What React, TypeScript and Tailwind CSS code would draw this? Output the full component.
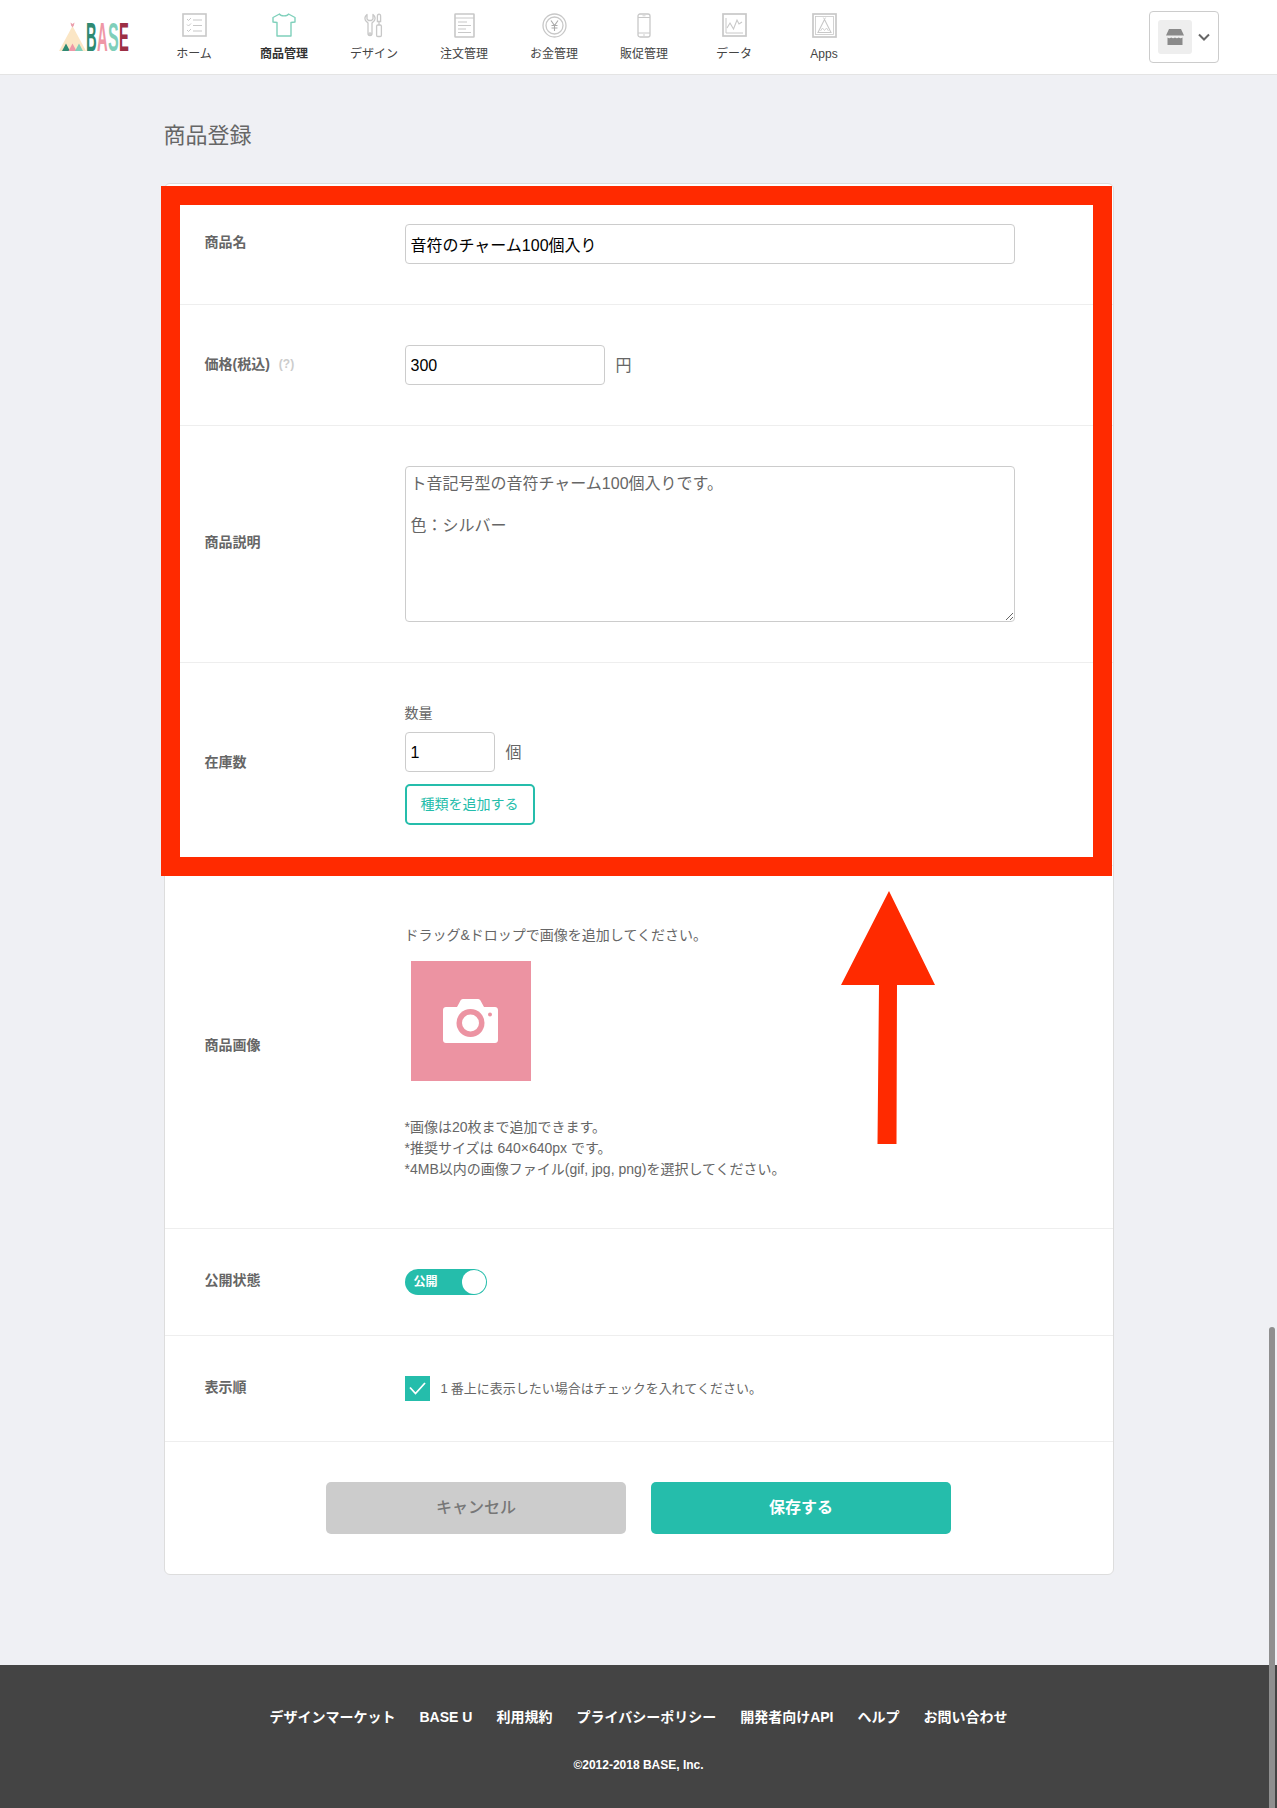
import React from "react";

const font = { fontFamily: '"Liberation Sans", "Noto Sans CJK JP", sans-serif' };

const Grey = "#c8c8c8";

function IconHome() {
  return (
    <svg width="25" height="24" viewBox="0 0 25 24" fill="none" stroke={Grey}>
      <rect x="1" y="1" width="23" height="22" strokeWidth="1.6" />
      <path d="M5 6l1.5 1.5L9 5M5 11.5L6.5 13 9 10.5M5 17l1.5 1.5L9 16" strokeWidth="1" />
      <path d="M11 7h9M11 12.5h9M11 18h9" strokeWidth="1.2" />
    </svg>
  );
}
function IconShirt() {
  return (
    <svg width="24" height="24" viewBox="0 0 24 24" fill="none" stroke="#7fd0bb" strokeWidth="1.4">
      <path d="M7.5 1L1 4.5 1 9l4 0.5V23h14V9.5L23 9V4.5L16.5 1C15.5 3.5 8.5 3.5 7.5 1Z" strokeLinejoin="round" />
    </svg>
  );
}
function IconTools() {
  return (
    <svg width="20" height="25" viewBox="0 0 20 25" fill="none" stroke={Grey} strokeWidth="1.3">
      <path d="M3 1.5C1 3 .6 5.5 1.5 7.5L4 10v10.5a1.8 1.8 0 0 0 4 0V10l2.5-2.5c.9-2 .5-4.5-1.5-6V6L7.5 7.5h-3L3 6V1.5Z" strokeLinejoin="round" />
      <circle cx="6" cy="21" r="1.2" />
      <path d="M15 1.2c1 0 1.6.8 1.6 2v5.3h-3.2V3.2c0-1.2.6-2 1.6-2ZM15 8.5V12" />
      <rect x="12.6" y="12" width="4.8" height="11.5" rx="1.2" />
    </svg>
  );
}
function IconDoc() {
  return (
    <svg width="21" height="25" viewBox="0 0 21 25" fill="none" stroke={Grey}>
      <rect x="1" y="1" width="19" height="23" rx="0.5" strokeWidth="1.6" />
      <path d="M1 5h19" strokeWidth="1" />
      <path d="M4 9h9M4 12.5h13M4 16h8M4 19.5h13" strokeWidth="1.1" />
    </svg>
  );
}
function IconCoin() {
  return (
    <svg width="25" height="25" viewBox="0 0 25 25" fill="none" stroke={Grey}>
      <circle cx="12.5" cy="12.5" r="11.5" strokeWidth="1.3" />
      <circle cx="12.5" cy="12.5" r="8.5" strokeWidth="1.3" />
      <path d="M9 7.5l3.5 5 3.5-5M12.5 12.5V18M9.5 12.5h6M9.5 15h6" stroke="#aaaaaa" strokeWidth="1.1" />
    </svg>
  );
}
function IconPhone() {
  return (
    <svg width="14" height="25" viewBox="0 0 14 25" fill="none" stroke={Grey}>
      <rect x="1" y="1" width="12" height="23" rx="2" strokeWidth="1.3" />
      <path d="M1 4.5h12M1 20h12" strokeWidth="1" />
      <path d="M5.5 2.8h3" strokeWidth="0.8" />
      <circle cx="7" cy="22" r="0.8" fill={Grey} stroke="none" />
    </svg>
  );
}
function IconChart() {
  return (
    <svg width="25" height="24" viewBox="0 0 25 24" fill="none" stroke={Grey}>
      <rect x="1" y="1" width="23" height="22" strokeWidth="1.7" />
      <path d="M4 5v15h17" strokeWidth="1" />
      <path d="M5 15l3-5 3.5 6 3.5-9 2 4 3-2" strokeWidth="1.1" />
    </svg>
  );
}
function IconApps() {
  return (
    <svg width="25" height="25" viewBox="0 0 25 25" fill="none" stroke={Grey}>
      <rect x="1" y="1" width="23" height="23" strokeWidth="1.7" />
      <rect x="3.5" y="3.5" width="18" height="18" strokeWidth="0.8" />
      <path d="M12.5 6.5L6 19.5h13L12.5 6.5Z" strokeWidth="1.1" />
      <path d="M11.3 4.5l1.2 2 1.2-2M8.5 18l2-3 2 2.5 2-2.5 2 3" strokeWidth="0.8" />
    </svg>
  );
}

function Logo() {
  return (
    <svg width="71" height="30" viewBox="0 0 71 30" className="overflow-visible">
      <path d="M13.5 4L0 29h27L13.5 4Z" fill="#fbe6c5" />
      <path d="M11.5 0.5l2 1.5 2-1.5-.6 3-1.4 2-1.4-2Z" fill="#eba0ad" />
      <path d="M7 21.5L3 29h8Z" fill="#2f8a72" />
      <path d="M13.5 21.5L9.5 29h8Z" fill="#ef97a6" />
      <path d="M20 21.5L16 29h8Z" fill="#7fcfba" />
      <g fontFamily="Liberation Sans" fontWeight="700" fontSize="40">
        <text transform="translate(27 29) scale(0.37 1)" fill="#2f8a72">B</text>
        <text transform="translate(38 29) scale(0.37 1)" fill="#ef97a6">A</text>
        <text transform="translate(49 29) scale(0.4 1)" fill="#7fcfba">S</text>
        <text transform="translate(60 29) scale(0.37 1)" fill="#9c2f45">E</text>
      </g>
    </svg>
  );
}

const navItems: { label: string; icon: React.ReactNode; active?: boolean }[] = [
  { label: "ホーム", icon: <IconHome /> },
  { label: "商品管理", icon: <IconShirt />, active: true },
  { label: "デザイン", icon: <IconTools /> },
  { label: "注文管理", icon: <IconDoc /> },
  { label: "お金管理", icon: <IconCoin /> },
  { label: "販促管理", icon: <IconPhone /> },
  { label: "データ", icon: <IconChart /> },
  { label: "Apps", icon: <IconApps /> },
];

function Header() {
  return (
    <header className="flex h-[75px] items-center border-b border-[#e4e4e4] bg-white">
      <div className="ml-[59px] mt-[-1px] flex w-[90px]">
        <Logo />
      </div>
      <nav className="flex">
        {navItems.map((n) => (
          <div key={n.label} className="flex h-[75px] w-[90px] flex-col items-center pt-[13px]">
            <div className="flex h-[25px] items-center justify-center">{n.icon}</div>
            <span
              className={
                "mt-[7px] text-[12px] leading-[18px] " +
                (n.active ? "font-bold text-[#333333]" : "text-[#444444]")
              }
            >
              {n.label}
            </span>
          </div>
        ))}
      </nav>
      <div className="ml-auto mr-[58px] mt-[-1px] flex h-[52px] w-[70px] items-center rounded-[4px] border border-[#cccccc] bg-white pl-[8px]">
        <div className="flex h-[34px] w-[34px] items-center justify-center rounded-[3px] bg-[#eeeeee]">
          <svg width="18" height="18" viewBox="0 0 18 18">
            <path d="M3 1h12l3 6.5H0Z" fill="#8a8a8a" />
            <path d="M1.5 9.5c1.3 1 2.5 1 3.7 0 1.2 1 2.5 1 3.8 0 1.3 1 2.5 1 3.8 0 1.2 1 2.4 1 3.7 0V17h-15Z" fill="#8a8a8a" />
          </svg>
        </div>
        <svg className="ml-[6px]" width="12" height="8" viewBox="0 0 12 8" fill="none" stroke="#666666" strokeWidth="2">
          <path d="M1 1.5l5 5 5-5" />
        </svg>
      </div>
    </header>
  );
}

function Row({
  label,
  children,
  extra,
  className,
  labelClass,
}: {
  label: string;
  children: React.ReactNode;
  extra?: React.ReactNode;
  className?: string;
  labelClass?: string;
}) {
  return (
    <div className={"flex items-center border-b border-[#eeeeee] pl-[40px] " + (className ?? "py-[40px]")}>
      <div
        className={
          "flex w-[200px] shrink-0 items-center text-[14px] font-bold leading-[20px] text-[#666666] " +
          (labelClass ?? "mt-[-4px]")
        }
      >
        {label}
        {extra}
      </div>
      <div className="min-w-0 flex-1">{children}</div>
    </div>
  );
}

const inputCls =
  "block h-[40px] rounded-[4px] border border-[#cccccc] bg-white px-[5px] text-[16px] text-black outline-none";

function Card() {
  return (
    <div className="rounded-[6px] border border-[#dddddd] bg-white">
      <Row label="商品名">
        <input readOnly defaultValue="音符のチャーム100個入り" style={font} className={inputCls + " w-[610px]"} />
      </Row>
      <Row
        label="価格(税込)"
        labelClass="mt-[-2px]"
        extra={<span className="ml-[9px] text-[12px] font-bold text-[#cccccc]">(?)</span>}
      >
        <div className="flex items-center">
          <input readOnly defaultValue="300" style={font} className={inputCls + " w-[200px] pt-[2px]"} />
          <span className="ml-[11px] mt-[2px] text-[16px] text-[#666666]">円</span>
        </div>
      </Row>
      <Row label="商品説明">
        <textarea
          readOnly
          style={font}
          defaultValue={"ト音記号型の音符チャーム100個入りです。\n\n色：シルバー"}
          className="block h-[156px] w-[610px] rounded-[4px] border border-[#cccccc] bg-white px-[5px] py-[6px] text-[16px] leading-[21px] text-[#666666] outline-none"
        />
      </Row>
      <Row label="在庫数">
        <div className="text-[14px] leading-[20px] text-[#666666]">数量</div>
        <div className="mt-[9px] flex items-center">
          <input readOnly defaultValue="1" style={font} className={inputCls + " w-[90px] pt-[2px]"} />
          <span className="ml-[11px] mt-[2px] text-[16px] text-[#666666]">個</span>
        </div>
        <button
          style={font}
          className="mt-[12px] flex h-[41px] w-[130px] items-center justify-center rounded-[5px] border-2 border-[#25bdab] bg-white text-[14px] text-[#25bdab]"
        >
          種類を追加する
        </button>
      </Row>
      <Row label="商品画像" className="pb-[48px] pt-[59px]" labelClass="mt-[-15px]">
        <div className="text-[14px] leading-[21px] text-[#666666]">ドラッグ&ドロップで画像を追加してください。</div>
        <div className="ml-[6px] mt-[15px] flex h-[120px] w-[120px] items-center justify-center bg-[#ec93a2]">
          <svg width="55" height="44" viewBox="0 0 55 44">
            <path
              d="M3 8h11l3-5.5C17.6 1 18.5 0 20 0h15c1.5 0 2.4 1 3 2.5L41 8h11c1.7 0 3 1.3 3 3v30c0 1.7-1.3 3-3 3H3c-1.7 0-3-1.3-3-3V11c0-1.7 1.3-3 3-3Z"
              fill="#ffffff"
            />
            <circle cx="27.5" cy="24" r="14" fill="#ec93a2" />
            <circle cx="27.5" cy="24" r="8.5" fill="#ffffff" />
            <circle cx="47" cy="15.5" r="2" fill="#ec93a2" />
          </svg>
        </div>
        <div className="mt-[36px] text-[14px] leading-[21px] text-[#666666]">
          <div>*画像は20枚まで追加できます。</div>
          <div>*推奨サイズは 640×640px です。</div>
          <div>*4MB以内の画像ファイル(gif, jpg, png)を選択してください。</div>
        </div>
      </Row>
      <Row label="公開状態">
        <div className="flex h-[26px] w-[82px] items-center justify-between rounded-full bg-[#25bdab] pl-[9px] pr-[1px]">
          <span className="text-[12px] font-bold text-white">公開</span>
          <span className="h-[24px] w-[24px] rounded-full bg-white" />
        </div>
      </Row>
      <Row label="表示順" labelClass="mt-[-3px]">
        <div className="flex items-center">
          <div className="flex h-[25px] w-[25px] items-center justify-center bg-[#25bdab]">
            <svg width="17" height="13" viewBox="0 0 17 13" fill="none" stroke="#ffffff" strokeWidth="1.8">
              <path d="M1 5.5l5.5 6L16 1" />
            </svg>
          </div>
          <span className="ml-[11px] text-[13px] text-[#666666]">
            <span className="mr-[3px]">1</span>番上に表示したい場合はチェックを入れてください。
          </span>
        </div>
      </Row>
      <div className="flex justify-center gap-[25px] py-[40px]">
        <button style={font} className="h-[52px] w-[300px] rounded-[5px] bg-[#cccccc] text-[16px] font-medium text-[#777777]">
          キャンセル
        </button>
        <button style={font} className="h-[52px] w-[300px] rounded-[5px] bg-[#25bdab] text-[16px] font-bold text-white">
          保存する
        </button>
      </div>
    </div>
  );
}

function Footer() {
  const links = ["デザインマーケット", "BASE U", "利用規約", "プライバシーポリシー", "開発者向けAPI", "ヘルプ", "お問い合わせ"];
  return (
    <footer className="flex h-[143px] flex-col items-center bg-[#444444] pt-[41px] font-bold text-white">
      <div className="flex gap-[24px] text-[14px] leading-[22px]">
        {links.map((l) => (
          <span key={l}>{l}</span>
        ))}
      </div>
      <div className="mt-[27px] text-[12px] leading-[20px]">©2012-2018 BASE, Inc.</div>
    </footer>
  );
}

export default function App() {
  return (
    <div style={font} className="relative h-[1808px] overflow-hidden bg-[#eff0f4]">
      <Header />
      <main className="mx-auto h-[1590px] w-[950px]">
        <h1 className="pt-[46px] text-[22px] font-normal leading-[30px] text-[#666666]">商品登録</h1>
        <div className="mt-[32px]">
          <Card />
        </div>
      </main>
      <Footer />

      {/* red annotation overlaid on the screenshot */}
      <div className="absolute left-[161px] top-[186px] h-[690px] w-[951px] border-[19px] border-[#ff2a00]" />
      <svg className="absolute left-[841px] top-[891px]" width="94" height="253" viewBox="0 0 94 253" fill="#ff2a00">
        <path d="M48 0L94 94H56L55.5 253H36.5L38 94H0Z" />
      </svg>

      {/* scrollbar thumb */}
      <div className="absolute right-[2px] top-[1327px] h-[481px] w-[6px] rounded-t-full bg-[#8f8f8f]" />
    </div>
  );
}
